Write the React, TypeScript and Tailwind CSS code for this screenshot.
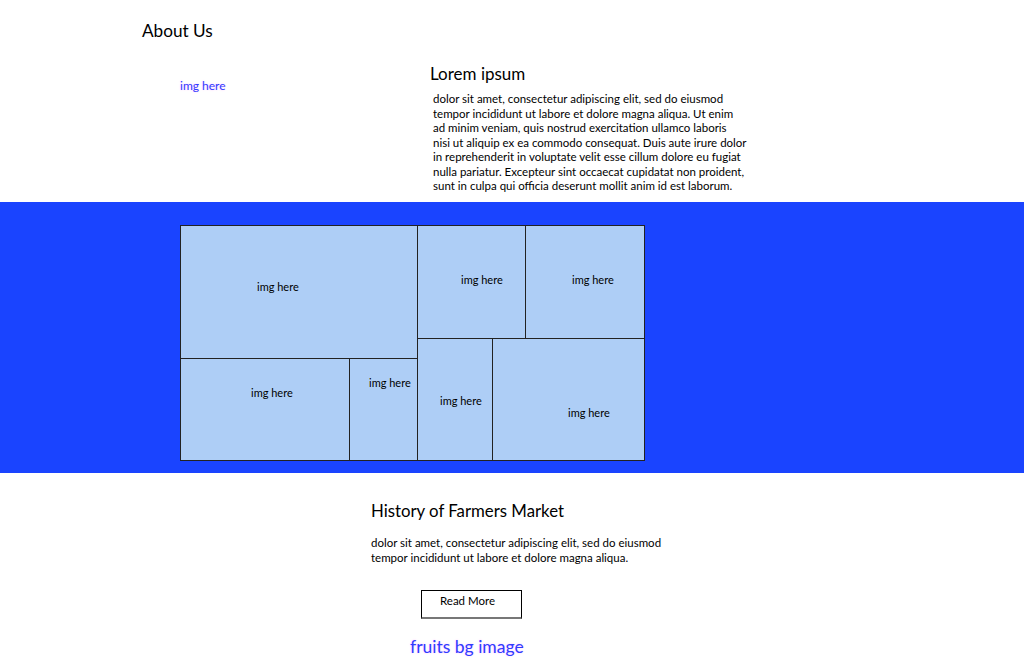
import React from "react";

const font = { fontFamily: "Lato, 'Open Sans', sans-serif" };

function Cell({ className, labelClass }: { className: string; labelClass: string }) {
  return (
    <div className={`bg-[#aecef6] ${className}`}>
      <div className={`text-[11px] text-black ${labelClass}`}>img here</div>
    </div>
  );
}

export default function App() {
  return (
    <div className="w-[1024px] h-[658px] bg-white overflow-hidden relative" style={font}>
      <div className="h-[202px] relative">
        <div className="pl-[142px] pt-[20px] text-[17.2px] leading-[22px] text-black">About Us</div>
        <div className="flex">
          <div className="pl-[180px] pt-[30px] w-[430px]">
            <span className="text-[12px] text-[#2f3cff] [text-shadow:0_0_2px_rgba(255,120,255,0.45)]">img here</span>
          </div>
          <div className="pt-[21px]">
            <div className="text-[17px] leading-[22px] text-black">Lorem ipsum</div>
            <p className="pl-[3px] pt-[7px] w-[340px] whitespace-nowrap text-[11.5px] leading-[14.5px] text-black">
              dolor sit amet, consectetur adipiscing elit, sed do eiusmod<br />
              tempor incididunt ut labore et dolore magna aliqua. Ut enim<br />
              ad minim veniam, quis nostrud exercitation ullamco laboris<br />
              nisi ut aliquip ex ea commodo consequat. Duis aute irure dolor<br />
              in reprehenderit in voluptate velit esse cillum dolore eu fugiat<br />
              nulla pariatur. Excepteur sint occaecat cupidatat non proident,<br />
              sunt in culpa qui officia deserunt mollit anim id est laborum.
            </p>
          </div>
        </div>
      </div>
      <div className="h-[271px] bg-[#1a44ff] pt-[23px] pl-[180px]">
        <div className="w-[465px] h-[236px] border border-[#222] flex">
          <div className="w-[237px] border-r border-[#222] flex flex-col">
            <Cell className="h-[133px] border-b border-[#222]" labelClass="pl-[76px] pt-[53px]" />
            <div className="flex flex-1">
              <Cell className="w-[169px] border-r border-[#222]" labelClass="pl-[70px] pt-[26px]" />
              <Cell className="flex-1" labelClass="pl-[19px] pt-[16px]" />
            </div>
          </div>
          <div className="flex-1 flex flex-col">
            <div className="h-[113px] border-b border-[#222] flex">
              <Cell className="w-[108px] border-r border-[#222]" labelClass="pl-[43px] pt-[46px]" />
              <Cell className="flex-1" labelClass="pl-[46px] pt-[46px]" />
            </div>
            <div className="flex flex-1">
              <Cell className="w-[75px] border-r border-[#222]" labelClass="pl-[22px] pt-[54px]" />
              <Cell className="flex-1" labelClass="pl-[75px] pt-[66px]" />
            </div>
          </div>
        </div>
      </div>
      <div className="pl-[371px] pt-[27px]">
        <div className="text-[16.8px] leading-[22px] text-black">History of Farmers Market</div>
        <p className="pt-[14px] w-[320px] text-[11.5px] leading-[14.5px] text-black">
          dolor sit amet, consectetur adipiscing elit, sed do eiusmod tempor incididunt ut labore et dolore magna aliqua.
        </p>
        <div className="ml-[50px] mt-[25px] w-[101px] h-[29px] border border-black border-b-2 border-b-[#777] pl-[18px] pt-[3px] text-[11.5px] leading-[14px] text-black">
          Read More
        </div>
        <div className="pl-[39px] pt-[18px] text-[17.5px] leading-[20px] text-[#2f3cff] [text-shadow:0_0_2px_rgba(255,120,255,0.45)]">
          fruits bg image
        </div>
      </div>
    </div>
  );
}
